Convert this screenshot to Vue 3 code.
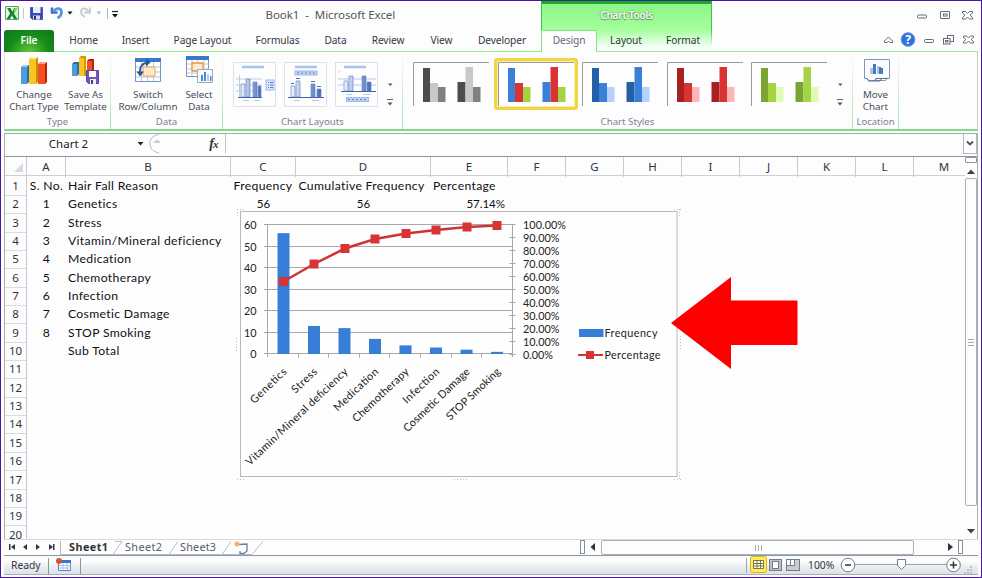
<script setup>
const tabs = [
  { n: 'Home', w: 59 }, { n: 'Insert', w: 45 }, { n: 'Page Layout', w: 89 },
  { n: 'Formulas', w: 61 }, { n: 'Data', w: 55 }, { n: 'Review', w: 50 },
  { n: 'View', w: 57 }, { n: 'Developer', w: 64 },
]
const styles = [
  { c: ['#4d4d4d', '#c8c8c8', '#808080'] },
  { c: ['#3a80d8', '#d83434', '#a4d444'], on: true },
  { c: ['#2460a8', '#3a80d8', '#b8d0fc'] },
  { c: ['#a82020', '#d83434', '#ffb6b6'] },
  { c: ['#7ca430', '#a4d444', '#e0fcb4'] },
]
const cols = 'ABCDEFGHIJKLM'.split('')
const reasons = ['Genetics', 'Stress', 'Vitamin/Mineral deficiency', 'Medication', 'Chemotherapy', 'Infection', 'Cosmetic Damage', 'STOP Smoking']
const rows = Array.from({ length: 20 }, (_, i) => {
  if (i === 0) return ['S. No.', 'Hair Fall Reason', 'Frequency', 'Cumulative Frequency', 'Percentage']
  if (i === 1) return ['1', reasons[0], '56', '56', '57.14%']
  if (i < 9) return [String(i), reasons[i - 1], '', '', '']
  if (i === 9) return ['', 'Sub Total', '', '', '']
  return ['', '', '', '', '']
})
const values = [56, 13, 12, 7, 4, 3, 2, 1]
const lengths = [46, 31, 136, 57, 73, 46, 87, 70]
const bars = values.map((v, i) => ({ x: 41.5 + i * 30.5, y: 146 - v * 2.158, h: v * 2.158, cx: 47.5 + i * 30.5, name: reasons[i], len: lengths[i] }))
const pts = [[47.5, 73.5], [78, 56], [109, 40.5], [139, 31], [170, 25.5], [200, 22], [231, 19], [261, 17.5]]
const pct = Array.from({ length: 11 }, (_, i) => ({ t: (100 - i * 10) + '.00%', y: 16.5 + i * 12.95, w: i === 0 ? 43 : i === 10 ? 30 : 36.5 }))
const left = [60, 50, 40, 30, 20, 10, 0].map((v, i) => ({ v, y: 16.5 + i * 21.58 }))
</script>

<template>
  <div class="window">
    <header class="title">
      <div class="qat">
        <svg width="122" height="22" viewBox="0 0 122 22">
          <path d="M1.500 4.500h13v13h-13z" fill="#f4fbf4" stroke="#5aa75e" />
          <path d="M10 5h4v12h-4z" fill="#d4eed0" />
          <path d="M3 6h3.500l1.800 3.500L10 6h3.200l-3.300 5.500L13.300 17H9.800L8 13.500 6 17H2.500L6 11.500z" fill="#18892b" />
          <path d="M9.500 8.500L11 6h2.200l-2.800 4.500z" fill="#8ed460" />
          <path d="M19.500 6v11" stroke="#c4c8d0" />
          <path d="M26.500 5.500h12v12h-10l-2-2z" fill="#3848b8" stroke="#4a58c0" />
          <path d="M29 5h7.500v6H29z" fill="#e6eeff" /><path d="M29 13.500h7v4h-7z" fill="#d8def4" /><path d="M30 14h2v3.500h-2z" fill="#20307c" />
          <path d="M48 5.500v5h5.500" fill="none" stroke="#3474d0" stroke-width="2.500" />
          <path d="M49.500 9.500c3-4.500 8-3.500 8 .5 0 3-2 5-4 6" fill="none" stroke="#5a92e0" stroke-width="2.800" />
          <path d="M63.500 9.500h5l-2.500 3z" fill="#111" />
          <path d="M86 5.500v5h-5.500" fill="none" stroke="#c6c8ca" stroke-width="1.800" />
          <path d="M84.500 9.500c-3-4.500-7-3.500-7.500 0 0 3 2 4 4 5.500" fill="none" stroke="#cccdcf" stroke-width="2" />
          <path d="M92.500 9.500h4.500l-2.200 3z" fill="#b4b4b4" />
          <path d="M103.500 6v11" stroke="#b4b8c0" />
          <path d="M108 9.500h6" stroke="#222" stroke-width="1.200" /><path d="M108 12h6l-3 3.500z" fill="#111" />
        </svg>
      </div>
      <h1>Book1&nbsp; -&nbsp; Microsoft Excel</h1>
      <div class="tools">Chart Tools</div>
      <svg class="caption" width="70" height="28" viewBox="0 0 70 28" fill="#fff" stroke="#626a76">
        <rect x="5.500" y="14" width="9" height="3" rx="1" />
        <rect x="28.500" y="10.500" width="9" height="7" rx=".5" /><rect x="31.500" y="13" width="3.500" height="2" />
        <path d="M50.500 10.500h3l2 2 2-2h3v1.500l-2.500 2.200 2.500 2.300v1.500h-3l-2-2-2 2h-3v-1.500l2.500-2.300-2.500-2.200z" />
      </svg>
    </header>

    <nav class="tabs">
      <span class="file">File</span>
      <span v-for="t in tabs" :key="t.n" class="tab" :style="{ width: t.w + 'px' }">{{ t.n }}</span>
      <div class="context"><span class="design">Design</span><span class="lay">Layout</span><span class="fmt">Format</span></div>
      <svg class="mdi" width="96" height="22" viewBox="0 0 96 22" fill="#fff" stroke="#626a76">
        <path d="M5.500 11l4-4 4 4v1.500h-2.500l-1.500-1.500-1.500 1.500h-2.500z" />
        <circle cx="29" cy="9.500" r="6.800" fill="#2c74dc" stroke="#5c92dc" />
        <text x="29" y="14" text-anchor="middle" class="help">?</text>
        <rect x="45.500" y="9.500" width="9" height="3" rx="1" />
        <rect x="68.500" y="5.500" width="6" height="6" /><rect x="64.500" y="8.500" width="6.500" height="5.500" /><rect x="66.500" y="10.500" width="2.500" height="1.500" />
        <path d="M84.500 6h3l2 2 2-2h3v1.500L92 9.500l2.500 2V13h-3l-2-2-2 2h-3v-1.500l2.500-2-2.500-2z" />
      </svg>
    </nav>

    <section class="ribbon">
      <div class="group type">
        <div class="actions">
          <div class="action a1">
            <svg width="30" height="32" viewBox="0 0 30 32">
              <path d="M2 12l3-2h5v17l-2 2H2z" fill="#286da8" /><path d="M2 12h6v17H2z" fill="#4d9cdb" /><path d="M2 12l3-2h5l-2 2z" fill="#9bd0f5" />
              <path d="M10 4l3-2h6v25l-2 2h-7z" fill="#cc8d00" /><path d="M10 4h7v25h-7z" fill="#fac524" /><path d="M10 4l3-2h6l-2 2z" fill="#fff0a0" />
              <path d="M19 9l3-2h6v20l-2 2h-7z" fill="#b82008" /><path d="M19 9h7v20h-7z" fill="#f15023" /><path d="M19 9l3-2h6l-2 2z" fill="#ffa080" />
            </svg>
            <span>Change<br>Chart Type</span>
          </div>
          <div class="action a2">
            <svg width="30" height="32" viewBox="0 0 30 32">
              <path d="M1 9l2-2h5v12l-2 2H1z" fill="#286da8" /><path d="M1 9h5v12H1z" fill="#4d9cdb" />
              <path d="M8 3l2-2h5v20H8z" fill="#d79900" /><path d="M8 3h5v18H8z" fill="#fac524" />
              <path d="M16 6l2-2h5v15h-7z" fill="#b82008" /><path d="M16 6h5v12h-5z" fill="#f15023" />
              <path d="M15.500 15.500h12v13h-10l-2-2z" fill="#7456b6" stroke="#5f429b" /><path d="M18 16h7v6h-7z" fill="#fff" /><path d="M19 24h6v5h-6z" fill="#eee" /><path d="M20 25h2v4h-2z" fill="#513989" />
            </svg>
            <span>Save As<br>Template</span>
          </div>
        </div>
        <footer>Type</footer>
      </div>
      <div class="group data">
        <div class="actions">
          <div class="action a3">
            <svg width="30" height="32" viewBox="0 0 30 32">
              <path d="M2.500 3.500h25v23h-25z" fill="#fff" stroke="#7895c0" /><path d="M2 3h26v4H2z" fill="#3978cb" />
              <path d="M3 12h24M3 17h24M3 22h24M8.500 7v19M14.500 7v19M20.500 7v19" stroke="#b9c9e2" /><path d="M10 12h12v9H10z" fill="#ffe9c9" stroke="#f1a44a" />
              <path d="M7 20C6 12 9 8 15 7.500" fill="none" stroke="#27589c" stroke-width="1.800" /><path d="M13 3.500l4.500 4-4.500 4zM3.500 16.500l3.500 5 4-5z" fill="#27589c" />
            </svg>
            <span>Switch<br>Row/Column</span>
          </div>
          <div class="action a4">
            <svg width="30" height="32" viewBox="0 0 30 32">
              <path d="M2.500 1.500h22v20h-22z" fill="#fff" stroke="#7895c0" /><path d="M2 1h23v4H2z" fill="#3978cb" />
              <path d="M3 9h22M3 14h22M3 18h22M8 5v16M14 5v16M20 5v16" stroke="#b9c9e2" /><path d="M8 8h11v8H8z" fill="#ffeacb" stroke="#ec973b" stroke-width="1.300" />
              <path d="M13.500 14.500h15v13h-15z" fill="#f7fbff" stroke="#9baabd" /><path d="M17 20h2v6h-2zM20 17h2v9h-2zM26 21h1.500v5H26z" fill="#5489ca" /><path d="M23 19h2v7h-2z" fill="#b5d0ef" />
            </svg>
            <span>Select<br>Data</span>
          </div>
        </div>
        <footer>Data</footer>
      </div>
      <div class="group layouts">
        <div class="gallery">
          <svg v-for="i in 3" :key="i" class="layout" width="43" height="45" viewBox="0 0 43 45">
            <defs><linearGradient :id="'b' + i"><stop stop-color="#f0f6ff" /><stop offset="1" stop-color="#4468b8" /></linearGradient></defs>
            <rect x=".5" y=".5" width="42" height="44" fill="#fdfdfe" stroke="#dde1ec" />
            <path :d="i === 2 ? 'M11 5h22' : 'M9 5h22'" stroke="#a9c2f0" stroke-width="2.500" />
            <g v-if="i === 1">
              <path d="M5 17h24M5 23h24M5 29h24M6.500 13v23M3 17h2M3 23h2M3 29h2" stroke="#bccbe6" />
              <path d="M8 22h4v13H8zM13 17h4v18h-4zM20 20h4v15h-4zM25 24h3v11h-3z" :fill="'url(#b' + i + ')'" stroke="#6c8bcc" stroke-width=".7" />
              <path d="M5 35.500h24" stroke="#3f63aa" /><path d="M10 38.500h6M21 38.500h6" stroke="#b8c9e9" />
              <rect x="33" y="18" width="8" height="10" fill="#dbe7ff" stroke="#98b7eb" /><path d="M35 20.500h1M37 20.500h3M35 23h1M37 23h3M35 25.500h1M37 25.500h3" stroke="#5278bf" />
            </g>
            <g v-else-if="i === 2">
              <rect x="11" y="9" width="22" height="4" fill="#bfd3f7" stroke="#9db8eb" /><path d="M13 11h18" stroke="#5f86cb" stroke-dasharray="2 2" />
              <path d="M7 24h4v11H7zM12 19h4v16h-4zM27 22h4v13h-4zM33 27h4v8h-4z" :fill="'url(#b' + i + ')'" stroke="#6c8bcc" stroke-width=".7" />
              <path d="M7 21.500h3M12 16.500h4M27 19.500h4M33 24.500h4" stroke="#5270a8" /><path d="M4 35.500h36" stroke="#3f63aa" /><path d="M10 38.500h6M28 38.500h7" stroke="#b8c9e9" />
            </g>
            <g v-else>
              <path d="M5 17h36M5 23h36" stroke="#b7c8e9" /><path d="M3 10h2M3 17h2M3 23h2" stroke="#bccbe6" />
              <path d="M9 19h4v10H9zM14 14h4v15h-4zM27 14h4v15h-4zM32 20h4v9h-4z" :fill="'url(#b' + i + ')'" stroke="#6c8bcc" stroke-width=".7" />
              <path d="M6 29.500h35" stroke="#3f63aa" /><path d="M11 32.500h6M28 32.500h7" stroke="#b8c9e9" />
              <rect x="11.500" y="35.500" width="22" height="4" fill="#bfd3f7" stroke="#9db8eb" /><path d="M13 37.500h18" stroke="#5f86cb" stroke-dasharray="2 2" />
            </g>
          </svg>
          <svg class="more" width="12" height="50" viewBox="0 0 12 50"><path d="M4 24.500h4.500l-2.200 2.500zM3.500 43.500h5l-2.500 3z" fill="#555" /><path d="M3 40.500h6" stroke="#666" /></svg>
        </div>
        <footer>Chart Layouts</footer>
      </div>
      <div class="group styles">
        <div class="swatches">
          <div v-for="(s, i) in styles" :key="i" class="swatch" :class="{ on: s.on }">
            <svg width="76" height="44" viewBox="0 0 76 44">
              <path d="M.5 44V.5h76" stroke="#999aa0" fill="none" />
              <path d="M10 6h7v34h-7zM44.500 20h8v20h-8z" :fill="s.c[0]" />
              <path d="M17 21h8v19h-8zM52.500 5h7.500v35h-7.500z" :fill="s.c[1]" />
              <path d="M25 25h7.500v15H25zM60 25h7.500v15H60z" :fill="s.c[2]" />
            </svg>
          </div>
          <svg class="more" width="12" height="50" viewBox="0 0 12 50"><path d="M4 24.500h4.500l-2.200 2.500zM3.500 43.500h5l-2.500 3z" fill="#555" /><path d="M3 40.500h6" stroke="#666" /></svg>
        </div>
        <footer>Chart Styles</footer>
      </div>
      <div class="group location">
        <div class="actions">
          <div class="action a5">
            <svg width="30" height="32" viewBox="0 0 30 32">
              <path d="M3.500 4.500h25v19h-3l-1 2H8l-2-2H3.500z" fill="#fafcff" stroke="#8097bd" /><path d="M5 23.500h1l1.500 2.500h6l1.500-2.500h12M15 23.500l-1 2.500h5l1.500-2.500" fill="none" stroke="#536f9c" />
              <path d="M9 13h3v6H9zM16 11h2v8h-2z" fill="#a9c7ef" /><path d="M12 9h3v10h-3zM18 12h2v7h-2zM20 13h2v6h-2z" fill="#4b79bc" />
            </svg>
            <span>Move<br>Chart</span>
          </div>
        </div>
        <footer>Location</footer>
      </div>
    </section>

    <section class="formula">
      <span class="name">Chart 2</span>
      <svg width="92" height="20" viewBox="0 0 92 20">
        <path d="M-.5 8h6l-3 3.500z" fill="#222" /><path d="M21 .5c-7 1-9 5-9 9s2 8 9 9.500" fill="none" stroke="#b6b9c1" /><path d="M16 9a3 3 0 0 1 6 0z" fill="#c9ccd2" />
        <path d="M87.500 0v19" stroke="#c0c5cd" /><text x="76" y="13.500" class="fx">f</text><text x="75" y="14" class="fx small">x</text>
      </svg>
      <span class="expand"><svg width="12" height="18" viewBox="0 0 12 18"><path d="M3 7.500l3 3 3-3" fill="none" stroke="#4b525c" stroke-width="1.800" /></svg></span>
    </section>

    <main class="sheet">
      <div class="grid">
        <div class="line heads">
          <span class="corner"><svg width="10" height="10"><path d="M9 0v9H0z" fill="#d5dae2" /></svg></span>
          <span v-for="c in cols" :key="c" class="col">{{ c }}</span>
        </div>
        <div v-for="(r, i) in rows" :key="i" class="line row" :class="{ first: i === 0 }">
          <span class="num">{{ i + 1 }}</span>
          <span v-for="(c, j) in r" :key="j" class="cell" :class="'c' + j"><b>{{ c }}</b></span>
        </div>

        <div class="chart">
          <svg width="448" height="276" viewBox="0 0 448 276">
            <path d="M0 0h448v276H0z" fill="#fdfdfe" />
            <rect x="4.500" y="3.500" width="436.500" height="265" fill="#fefefe" stroke="#b6b8bb" />
            <g stroke="#a8a8a8">
              <path v-for="l in left" :key="l.v" :d="`M28 ${Math.floor(l.y) + .5}H276`" />
              <path d="M31.500 16.500V149M276.500 16.500V149" />
              <path v-for="i in 7" :key="i" :d="`M${Math.round(31 + i * 30.6) + .5} 146v3.500`" />
              <path v-for="p in pct" :key="p.t" :d="`M273.500 ${Math.floor(p.y) + .5}h6`" />
            </g>
            <rect v-for="b in bars" :key="b.name" :x="b.x" :y="b.y" width="12" :height="b.h" fill="#367ed8" />
            <polyline :points="pts.map(p => p.join(',')).join(' ')" fill="none" stroke="#ce3232" stroke-width="2.500" />
            <rect v-for="p in pts" :key="p[0]" :x="p[0] - 4.500" :y="p[1] - 4.500" width="9" height="9" fill="#d83434" />
            <text v-for="l in left" :key="l.v" x="20.500" :y="l.y + 4.500" text-anchor="end" :textLength="l.v ? 12.500 : 6">{{ l.v }}</text>
            <text v-for="p in pct" :key="p.t" x="287" :y="p.y + 4.500" :textLength="p.w">{{ p.t }}</text>
            <text v-for="b in bars" :key="b.name" :transform="`translate(${b.cx + 4},164.500) rotate(-43.500)`" text-anchor="end" :textLength="b.len">{{ b.name }}</text>
            <rect x="343" y="121" width="24.500" height="8" fill="#367ed8" />
            <text x="368.500" y="128.500" textLength="53">Frequency</text>
            <path d="M342 147h25" stroke="#d03333" stroke-width="2" /><rect x="350" y="143" width="8" height="8" fill="#d83434" />
            <text x="368.500" y="151" textLength="56">Percentage</text>
            <g stroke="#b9bcc1" stroke-dasharray="1 2"><path d="M1 1.500h8M438 1.500h8M1 271.500h8M438 271.500h8M218 271.500h13M.5 130v13M444.500 128v13M1.500 1v7M443.500 1v7M443.500 264v7" /></g>
          </svg>
        </div>
        <svg class="arrow" width="128" height="92" viewBox="0 0 128 92"><path d="M0 46L60 0v23.500h66.500V68H60v24z" fill="#f00" /></svg>
      </div>
      <aside class="vscroll">
        <i class="split"></i>
        <svg width="12" height="15"><path d="M2 11h8L6 6.500z" fill="#3c4148" /></svg>
        <div class="vthumb"><svg width="8" height="8"><path d="M1 1.500h6M1 4.500h6M1 7.500h6" stroke="#a5abb4" /></svg></div>
        <svg width="12" height="32"><path d="M2 23h8l-4 4.500z" fill="#3c4148" /></svg>
      </aside>
    </main>

    <div class="bottom">
      <svg width="266" height="15" viewBox="0 0 266 15">
        <g fill="#30363d"><path d="M5 4h1.500v6H5zM11 4v6L7 7zM23 4v6l-4-3zM32 4l4 3-4 3zM45 4l4 3-4 3zM49 4h1.500v6H49z" /></g>
        <path d="M56.500 1v13M56 14.500h53l9-13M118 1.500h-7M109 14.500h56l9-13M165 14.500h53l9-13M218 14.500h30l11-13" fill="none" stroke="#b7bdc5" />
        <text x="65" y="11" class="active" textLength="39">Sheet1</text><text x="121" y="11" textLength="37">Sheet2</text><text x="176" y="11" textLength="36">Sheet3</text>
        <path d="M235 4.500l8-.5v7l-3 2.500h-4V11" fill="#fff" stroke="#647fa9" stroke-width="1.300" /><path d="M233 1v6M230 4h6M231 2l4 4M235 2l-4 4" stroke="#eda330" />
      </svg>
      <div class="hscroll">
        <i class="box"></i><svg width="15" height="14"><path d="M10 3v8L5.500 7z" fill="#333" /></svg>
        <div class="hthumb"><svg width="8" height="8"><path d="M1.500 1v6M4.500 1v6M7.500 1v6" stroke="#a5abb4" /></svg></div>
        <svg width="44" height="14"><path d="M34 3v8l5-4z" fill="#333" /></svg><i class="box"></i>
      </div>
    </div>

    <footer class="status">
      <span class="ready">Ready</span>
      <svg class="macro" width="34" height="19" viewBox="0 0 34 19"><path d="M1.500 2v16M33.500 2v16" stroke="#8b949f" /><path d="M11.500 4.500h12v10h-12z" fill="#fff" stroke="#5b84c4" /><path d="M11 4h13v3H11z" fill="#3d77c9" /><path d="M12 9.500h12M12 12h12M16 7v7M20 7v7" stroke="#a6c1e7" /><circle cx="12" cy="5" r="3" fill="#db5235" /></svg>
      <svg class="views" width="60" height="19" viewBox="0 0 60 19">
        <path d="M1.500 2v15" stroke="#9ba5b1" /><rect x="5.500" y=".5" width="16" height="16" rx="2" fill="#ffec63" stroke="#d8b21d" />
        <path d="M8.500 4.500h10v8h-10zM8 7.500h11M8 10h11M12 4v9M15.500 4v9" fill="#fff" stroke="#7c7242" />
        <rect x="24.500" y="3.500" width="12" height="11" fill="#bcc1c6" stroke="#747c86" /><rect x="27.500" y="5.500" width="6" height="7" fill="#fff" stroke="#747c86" />
        <rect x="41.500" y="3.500" width="13" height="11" fill="#c7ccd1" stroke="#747c86" /><path d="M41.500 3.500h8v6h-8zM45.500 3.500v6" fill="#fff" stroke="#747c86" />
      </svg>
      <span class="pct">100%</span>
      <svg class="zoom" width="124" height="19" viewBox="0 0 124 19" fill="none" stroke="#737c87">
        <path d="M15 8.500h92" stroke="#9da6b0" /><circle cx="8" cy="9" r="6.800" fill="#fff" /><path d="M5 9h6" stroke="#333" stroke-width="1.500" />
        <path d="M57.500 3.500h8v6l-4 4-4-4z" fill="#fff" /><circle cx="113.500" cy="9" r="6.800" fill="#fff" /><path d="M110 9h7M113.500 5.500v7" stroke="#333" stroke-width="1.500" />
      </svg>
      <svg class="grip" width="10" height="19" viewBox="0 0 10 19"><path d="M7 10h2v2H7zM4 13h2v2H4zM7 13h2v2H7zM1 16h2v2H1zM4 16h2v2H4zM7 16h2v2H7z" fill="#bac2cc" /></svg>
    </footer>
  </div>
</template>

<style>
body { margin: 0; overflow: hidden; }
</style>
<style scoped>
* { box-sizing: border-box; }
svg { display: block; flex: none; }
.window { width: 982px; height: 578px; display: flex; flex-direction: column; padding: 0 3px; border: 1px solid #4a16a6; background: #fdfdfe; color: #34373e; font: 10.300px "Noto Sans", sans-serif; overflow: hidden; }
.title { height: 29px; flex: none; display: flex; }
.qat { width: 237px; flex: none; padding-top: 1px; }
h1 { margin: 0; width: 300px; flex: none; padding-left: 24.500px; font-size: 11.500px; font-weight: 400; line-height: 28px; letter-spacing: -.05px; color: #555; white-space: nowrap; }
.tools { width: 171px; flex: none; border-top: 3px solid #15ae22; border-left: 1px solid #35c840; border-right: 1px solid #35c840; background: linear-gradient(#8ff58a, #a3ff9b); color: #fff; text-align: center; line-height: 23px; font-size: 10px; font-weight: 600; letter-spacing: -.2px; text-shadow: 0 0 2px #438344, 0 1px 1px #5c965c; }
.caption { margin-left: 200px; }
.tabs { display: flex; height: 22px; flex: none; font-size: 10.200px; letter-spacing: -.1px; line-height: 21px; border-bottom: 1px solid #8cf48a; }
.tab, .file, .context span { text-align: center; white-space: nowrap; flex: none; }
.file { width: 50px; color: #fff; font-weight: 600; border-radius: 3px 3px 0 0; background: radial-gradient(ellipse at 50% 100%, #62c83c, #178d19 55%, #0b7517); margin-bottom: -1px; }
.context { margin-left: 7px; width: 171px; flex: none; display: flex; background: linear-gradient(#a6ffa0, #fdfdfe 90%); border-right: 1px solid; border-image: linear-gradient(#35c840, #fdfdfe 80%) 1; }
.context .design { width: 56px; background: #fdfdfe; border: 1px solid #83e581; border-bottom: 0; margin-bottom: -1px; color: #646877; border-radius: 2px 2px 0 0; line-height: 19px; }
.lay { width: 58px; }
.fmt { width: 56px; }
.mdi { margin-left: 167px; }
.help { fill: #fff; stroke: none; font: bold 12px "Noto Sans", sans-serif; letter-spacing: 0; }
.ribbon { display: flex; flex: none; height: 79px; border-bottom: 2px solid #80d88b; border-left: 1px solid #d8dbe0; border-right: 1px solid #c8ccd1; }
.group { display: flex; flex-direction: column; justify-content: space-between; border-right: 1px solid; border-image: linear-gradient(#fdfdfe, #c8eccc 60%, #a9dfaf) 1; }
.group footer { height: 14px; text-align: center; line-height: 14px; color: #7c8093; font-size: 9.700px; }
.type { width: 106px; }
.data { width: 112px; }
.layouts { width: 180px; }
.styles { width: 450px; }
.location { width: 46px; }
.location footer { font-size: 9.500px; }
.actions { display: flex; padding-top: 3px; height: 60px; }
.action { display: flex; flex-direction: column; align-items: center; text-align: center; font-size: 9.800px; line-height: 12px; white-space: nowrap; color: #4b4e57; }
.action span { margin-top: 2px; }
.a1 { width: 56px; margin-left: 1px; }
.a2 { width: 47px; }
.a3 { width: 68px; margin-left: 3px; }
.a4 { width: 34px; }
.a5 { width: 45px; }
.gallery { display: flex; gap: 8px; padding: 10px 0 0 10px; }
.more { margin-top: -3px; }
.layouts .more { margin-left: -2px; }
.swatches { display: flex; padding: 6px 0 0 6px; }
.swatch { width: 84.500px; height: 52px; padding: 4px 3px 0 4px; flex: none; }
.swatch svg { width: 76px; }
.swatch.on { border: 3px solid #f1d448; padding: 1px 0 0 1px; border-radius: 3px; background: #fff; box-shadow: inset 0 0 0 1px #fff399; }
.swatches .more { margin: 1px 0 0 2px; }
.formula { height: 24px; flex: none; margin-top: 2px; border-top: 1px solid #91b7a4; border-bottom: 1px solid #8d96a0; border-left: 1px solid #aaaeb7; border-right: 1px solid #aaaeb7; display: flex; }
.name { width: 133px; padding-right: 6px; text-align: center; line-height: 20px; font-size: 11.500px; color: #222; }
.fx { font: italic bold 14px "Liberation Serif", serif; fill: #30343a; text-anchor: end; }
.small { font-size: 11px; text-anchor: start; }
.expand { margin-left: auto; height: 20px; border: 1px solid #b4b8bf; border-top: 0; }
.sheet { display: flex; height: 382px; flex: none; overflow: hidden; border-right: 1px solid #aab0b8; border-left: 1px solid #aab0b8; }
.grid { width: 960px; flex: none; position: relative; font-family: Lato, sans-serif; }
.line { display: grid; grid-template-columns: 22px 39px 165px 65px 135px 77px 58px 58px 58px 58px 58px 58px 58px 51px; }
.heads { height: 19px; border-bottom: 1px solid #ccd1d8; font: 11.500px/20px "Noto Sans", sans-serif; color: #30333a; text-align: center; }
.corner { padding: 6px 0 0 9px; }
.corner, .col { border-right: 1px solid #c7ccd3; }
.col:last-child { border: 0; padding-left: 9px; }
.row { height: 18.350px; line-height: 19px; color: #111; font-size: 12.200px; }
.row b { font-weight: 400; white-space: nowrap; letter-spacing: .33px; }
.num { text-align: center; font: 11.500px/19px "Noto Sans", sans-serif; border-right: 1px solid #c4c9d1; border-bottom: 1px solid #d8dce2; color: #30333a; }
.c0, .c2, .c3 { text-align: center; }
.c1, .c4 { padding-left: 2px; }
.first .c2, .first .c3 { text-align: left; padding-left: 2.500px; }
.row:not(.first) .c4 { text-align: right; padding-right: 3px; }
.row:not(.first) .c4 b, .row:not(.first) .c2 b, .row:not(.first) .c3 b { font-size: 11.500px; letter-spacing: 0; }
.chart { position: absolute; left: 231px; top: 51px; width: 448px; height: 276px; }
.chart text { font: 10.800px Lato, sans-serif; fill: #222; }
.arrow { position: absolute; left: 666px; top: 120px; }
.vscroll { width: 13px; display: flex; flex-direction: column; align-items: center; }
.split { width: 12px; height: 6px; flex: none; border: 1px solid #8f959e; border-radius: 1px; }
.vthumb { width: 12px; height: 328px; flex: none; border: 1px solid #a9aeb8; border-radius: 2px; display: flex; align-items: center; justify-content: center; }
.bottom { display: flex; height: 16px; flex: none; border-top: 1px solid #d7dae0; }
.bottom text { font: 10.800px "Noto Sans", sans-serif; fill: #555b66; }
.bottom .active { font-weight: 700; fill: #333; }
.hscroll { display: flex; margin-left: 310px; }
.box { width: 5px; height: 14px; border: 1px solid #868e98; }
.hthumb { width: 313px; height: 15px; margin-left: 1px; border: 1px solid #a9aeb8; border-radius: 2px; display: flex; align-items: center; justify-content: center; }
.status { height: 20px; flex: none; display: flex; border-top: 1px solid #8e98a3; border-bottom: 1px solid #a6acb7; background: linear-gradient(#f7f9fa, #fff 25%, #e9edf1 60%, #dce2e8); }
.ready { width: 43px; flex: none; padding-left: 7px; line-height: 18px; }
.views { margin-left: 664px; }
.pct { width: 30px; flex: none; line-height: 18px; margin-left: 3px; }
.zoom { margin-left: 2px; }
.grip { margin-left: -1px; }
</style>
